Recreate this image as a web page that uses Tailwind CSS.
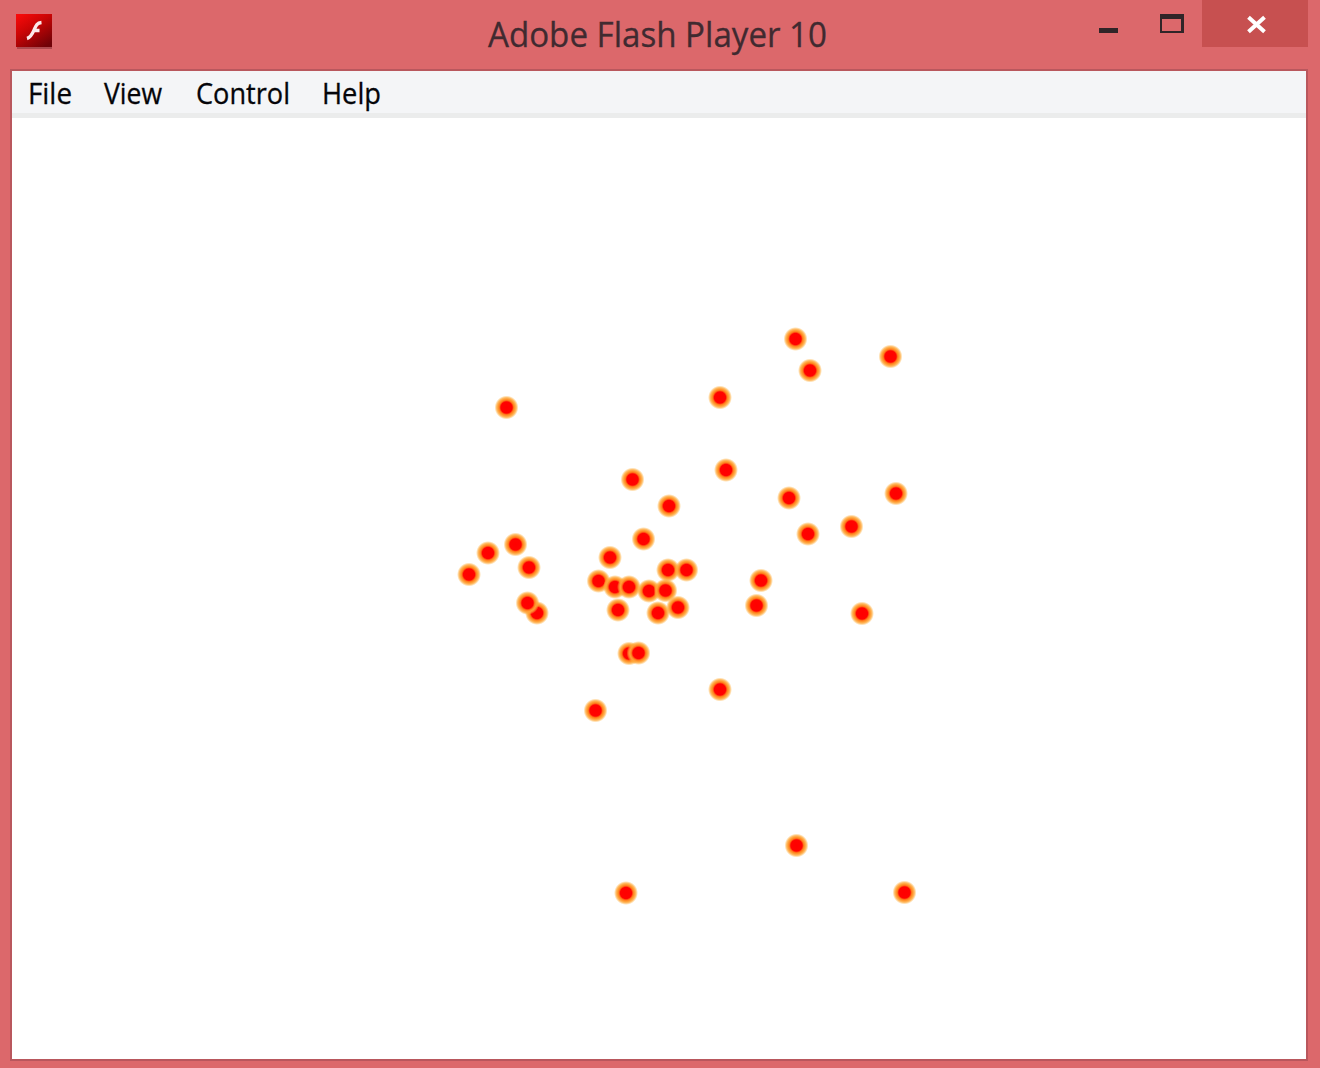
<!DOCTYPE html>
<html lang="en">
<head>
<meta charset="utf-8">
<title>Adobe Flash Player 10</title>
<script src="https://cdn.jsdelivr.net/npm/@tailwindcss/browser@4"></script>
</head>
<body class="overflow-hidden">
<div class="flex h-[1068px] w-[1320px] flex-col bg-[#dc686b] pr-3 pb-[7px] pl-[10px] font-['Open_Sans','Noto_Sans',sans-serif]">
  <header class="flex h-[69px] shrink-0 items-start">
    <svg class="mt-[12px] ml-[4px] h-[40px] w-[40px] shrink-0" viewBox="0 0 40 40">
      <defs>
        <linearGradient id="logo" x1="0.1" y1="0" x2="0.8" y2="1"><stop offset="0" stop-color="#f80a0a"/><stop offset="0.4" stop-color="#cc0505"/><stop offset="1" stop-color="#700207"/></linearGradient>
      </defs>
      <rect x="3" y="4" width="35" height="33" fill="#8b3036" opacity=".55"/>
      <rect x="2" y="2" width="36" height="33" fill="url(#logo)"/>
      <path d="M27.500 10.500C22.500 11 21.800 14 20 18.200S16.500 25.500 13 26.500M19.500 18.500h6" fill="none" stroke="#fbe9e9" stroke-width="3.400" stroke-linecap="butt"/>
    </svg>
    <svg class="ml-[422px] h-[69px] w-[364px] shrink-0" viewBox="476 0 364 69">
      <text x="488" y="47" font-size="35" textLength="339" lengthAdjust="spacingAndGlyphs" fill="#402a30" stroke="#402a30" stroke-width=".3">Adobe Flash Player 10</text>
    </svg>
    <div class="ml-auto flex">
      <svg class="h-[47px] w-[124px]" viewBox="1078 0 124 47">
        <rect x="1099" y="28" width="19" height="5" fill="#302528"/>
        <path fill-rule="evenodd" d="M1160 14h24v19h-24zM1162 19v12h19v-12z" fill="#302528"/>
      </svg>
      <div class="flex h-[47px] w-[106px] bg-[#c75050]">
        <svg class="h-[47px] w-[106px]" viewBox="1202 0 106 47">
          <path d="M1248.500 17.200l16 14.500M1264.500 17.200l-16 14.500" fill="none" stroke="#fff" stroke-width="4"/>
        </svg>
      </div>
    </div>
  </header>
  <main class="flex flex-1 flex-col border-2 border-[#b9575d] bg-white">
    <nav class="h-[47px] shrink-0 border-b-[5px] border-[#ebecec] bg-[#f4f5f7]">
      <svg class="h-[42px] w-[390px]" viewBox="12 71 390 42" fill="#050509" stroke="#050509" stroke-width=".3" font-size="28.500">
        <text x="28" y="104" textLength="44" lengthAdjust="spacingAndGlyphs">File</text>
        <text x="104" y="104" textLength="58" lengthAdjust="spacingAndGlyphs">View</text>
        <text x="196" y="104" textLength="94" lengthAdjust="spacingAndGlyphs">Control</text>
        <text x="322" y="104" textLength="59" lengthAdjust="spacingAndGlyphs">Help</text>
      </svg>
    </nav>
    <svg id="stage" class="h-[941px] w-[1294px]" viewBox="12 118 1294 941">
      <defs>
        <radialGradient id="glow">
          <stop offset="0" stop-color="#ff0000"/>
          <stop offset="0.470" stop-color="#ff0300"/>
          <stop offset="0.600" stop-color="#ff7d1c"/>
          <stop offset="0.720" stop-color="#ffa138"/>
          <stop offset="0.830" stop-color="#ffa738" stop-opacity="0.75"/>
          <stop offset="1" stop-color="#ffb53c" stop-opacity="0"/>
        </radialGradient>
      </defs>
    </svg>
  </main>
</div>
<script>
  const particles = [
    [795.500,339],[890.500,356.500],[810,370.500],[720,397.500],[506.500,407.500],
    [726,470],[632.500,479.500],[896,493.500],[789,498],[669,506],
    [851.500,526.500],[808,534],[643.500,539],[515.500,544.500],[488,553],
    [610,557.500],[529,567.500],[469,574.500],[668,570],[686.500,570],
    [598.500,581],[761,580.500],[615,587],[629,587],[649,591],[665.500,590.500],
    [537,613],[527.500,603],[756.500,605.500],[618,610],[658,613],[678,607.500],
    [862,613.500],[629,653.500],[638.500,653],[720,689.500],[595.500,710.500],
    [796.500,845.500],[626,893],[904.500,892.500]
  ];
  const stage = document.getElementById('stage');
  for (const [x, y] of particles) {
    const c = document.createElementNS('http://www.w3.org/2000/svg', 'circle');
    c.setAttribute('cx', x);
    c.setAttribute('cy', y);
    c.setAttribute('r', 12);
    c.setAttribute('fill', 'url(#glow)');
    stage.appendChild(c);
  }
</script>
</body>
</html>
